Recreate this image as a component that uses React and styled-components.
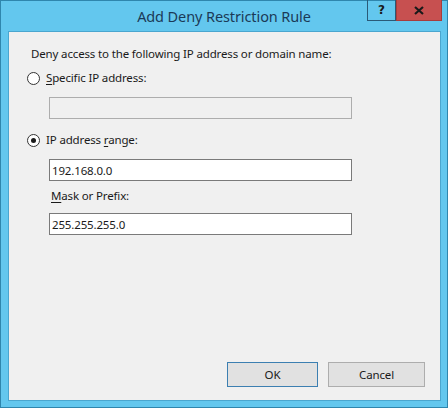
import React from "react";
import styled, { createGlobalStyle } from "styled-components";

const Global = createGlobalStyle`
  html, body { margin: 0; padding: 0; background: #62c6ee; }
  #root { width: 448px; height: 408px; }
`;

const Window = styled.div`
  box-sizing: border-box;
  width: 448px;
  height: 408px;
  background: #63c7ee;
  border: 1px solid #2f86ad;
  display: flex;
  flex-direction: column;
  font-family: "Noto Sans", "Open Sans", sans-serif;
  position: relative;
`;

const TitleBar = styled.div`
  height: 29px;
  display: flex;
  align-items: center;
  justify-content: center;
  position: relative;
`;

const Title = styled.div`
  font-size: 14.5px;
  color: #1b3a57;
  letter-spacing: -0.1px;
  margin-top: 1px;
`;

const Caption = styled.div`
  position: absolute;
  top: -1px;
  right: 5px;
  display: flex;
`;

const CapButton = styled.div`
  box-sizing: border-box;
  height: 21px;
  width: ${(p) => p.$w}px;
  display: flex;
  align-items: center;
  justify-content: center;
  background: ${(p) => (p.$close ? "#c75050" : "transparent")};
  border: 1px solid ${(p) => (p.$close ? "#a83c3c" : "#2a5a78")};
  border-top: none;
  color: #1a1a1a;
  font-family: "DejaVu Sans", sans-serif;
  font-weight: bold;
  font-size: 12px;
`;

const Client = styled.div`
  flex: 1;
  margin: 1px 6px 6px 7px;
  background: #f0f0f0;
  border: 1px solid #4aa6cf;
  display: flex;
  flex-direction: column;
  padding: 14px 0 13px 18px;
  font-size: 11.5px;
  color: #1a1a1a;
`;

const Prompt = styled.div`
  margin-left: 4px;
  height: 16px;
  line-height: 16px;
  letter-spacing: -0.15px;
`;

const RadioRow = styled.div`
  display: flex;
  align-items: center;
  gap: 6px;
  height: 16px;
  margin-top: ${(p) => p.$mt}px;
`;

const Radio = styled.span`
  box-sizing: border-box;
  width: 13px;
  height: 13px;
  border-radius: 50%;
  border: 1px solid #333;
  background: #fff;
  display: flex;
  align-items: center;
  justify-content: center;
  &::after {
    content: "";
    width: 5px;
    height: 5px;
    border-radius: 50%;
    background: ${(p) => (p.$checked ? "#1a1a1a" : "transparent")};
  }
`;

const Label = styled.span`
  letter-spacing: -0.15px;
  line-height: 16px;
  margin-left: ${(p) => p.$ml || 0}px;
  u { text-decoration: underline; text-underline-offset: 2px; }
`;

const Indent = styled.div`
  margin-left: 22px;
  margin-top: ${(p) => p.$mt}px;
  display: flex;
  flex-direction: column;
`;

const TextBox = styled.div`
  box-sizing: border-box;
  width: 303px;
  height: 22px;
  margin-top: ${(p) => p.$mt || 0}px;
  border: 1px solid ${(p) => (p.$disabled ? "#adadad" : "#7a7a7a")};
  background: ${(p) => (p.$disabled ? "#f0f0f0" : "#ffffff")};
  padding: 0 2px;
  display: flex;
  align-items: center;
  letter-spacing: -0.15px;
`;

const Spacer = styled.div`
  flex: 1;
`;

const Buttons = styled.div`
  display: flex;
  justify-content: flex-end;
  gap: 10px;
  padding-right: 15px;
`;

const Button = styled.div`
  box-sizing: border-box;
  width: ${(p) => p.$w}px;
  height: 25px;
  background: #e1e1e1;
  border: 1px solid ${(p) => (p.$default ? "#3c7fb1" : "#adadad")};
  display: flex;
  align-items: center;
  justify-content: center;
  letter-spacing: -0.15px;
`;

export default function App() {
  return (
    <>
      <Global />
      <Window>
        <TitleBar>
          <Title>Add Deny Restriction Rule</Title>
          <Caption>
            <CapButton $w={29}>?</CapButton>
            <CapButton $w={46} $close>
              <svg width="10" height="9" viewBox="0 0 10 9">
                <path d="M1 1 L9 8 M9 1 L1 8" stroke="#1a1a1a" strokeWidth="2.2" />
              </svg>
            </CapButton>
          </Caption>
        </TitleBar>
        <Client>
          <Prompt>Deny access to the following IP address or domain name:</Prompt>
          <RadioRow $mt={8}>
            <Radio />
            <Label>
              <u>S</u>pecific IP address:
            </Label>
          </RadioRow>
          <Indent $mt={11}>
            <TextBox $disabled />
          </Indent>
          <RadioRow $mt={13}>
            <Radio $checked />
            <Label>
              IP address <u>r</u>ange:
            </Label>
          </RadioRow>
          <Indent $mt={11}>
            <TextBox>192.168.0.0</TextBox>
            <RadioRow $mt={7}>
              <Label $ml={2}>
                <u>M</u>ask or Prefix:
              </Label>
            </RadioRow>
            <TextBox $mt={9}>255.255.255.0</TextBox>
          </Indent>
          <Spacer />
          <Buttons>
            <Button $w={91} $default>OK</Button>
            <Button $w={97}>Cancel</Button>
          </Buttons>
        </Client>
      </Window>
    </>
  );
}
